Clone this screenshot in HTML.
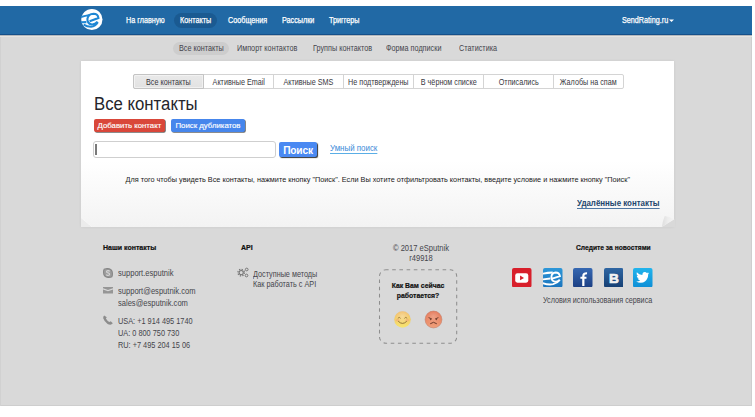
<!DOCTYPE html>
<html><head><meta charset="utf-8">
<style>
*{margin:0;padding:0;box-sizing:border-box}
html,body{width:755px;height:417px;overflow:hidden;background:#fff;font-family:"Liberation Sans",sans-serif}
.a{position:absolute;white-space:nowrap}
#page{position:absolute;left:0;top:6px;width:752px;height:400px;background:#d9d9d9;overflow:hidden;box-shadow:inset 1px 0 0 #d1d1d1,inset -1px -1px 0 #cecece}
#hdr{position:absolute;left:0;top:0;width:752px;height:29.4px;background:#2169a5;border-bottom:1px solid #15508a;box-shadow:0 1px 0 #b4b8bc,0 2px 0 #e6e4e2}
.hn{position:absolute;top:0;height:29px;line-height:28.4px;color:#fff;font-size:8.3px;-webkit-text-stroke:.25px #fff;transform:scaleX(.87);transform-origin:0 0}
.pill{position:absolute;left:174px;top:7px;width:43px;height:15px;border-radius:8px;background:#1a5a91}
.sn{position:absolute;top:36px;height:13px;line-height:13.6px;font-size:8.2px;color:#44444c;transform:scaleX(.885);transform-origin:0 0}
.snp{position:absolute;left:173px;top:35.6px;width:55.5px;height:13.6px;border-radius:7px;background:#cdcdcd}
#card{position:absolute;left:81px;top:55px;width:593px;height:166px;background:linear-gradient(#fff 0,#fff 60%,#f3f3f3 100%);box-shadow:0 0 3px rgba(0,0,0,.07)}
.tabs{position:absolute;left:52px;top:13px;width:491px;height:15px;border:1px solid #d4d4d4;border-radius:2px;background:#fff;display:flex}
.tab{flex:1;height:13px;line-height:15.2px;text-align:center;font-size:8.2px;color:#383840;border-left:1px solid #d4d4d4;white-space:nowrap}.tab span{display:inline-block;transform:scaleX(.88)}
.tab:first-child{border-left:0;background:linear-gradient(#e9e9e9,#e2e2e2);position:relative;box-shadow:inset 1px 1px 0 #f2f2f2,inset -1px -1px 0 #f0f0f0}.tab:first-child:before{content:'';position:absolute;left:-1px;top:-1px;right:-1px;bottom:-1px;border:1px solid #c4c4c4;border-radius:2px 0 0 2px}

.h1{position:absolute;left:12.8px;top:32.6px;font-size:17.6px;line-height:20px;color:#25252b;transform:scaleX(.952);transform-origin:0 0}
.btn{position:absolute;top:58px;height:13px;line-height:13px;font-size:7.8px;color:#fff;-webkit-text-stroke:.15px #fff;border-radius:2px;text-align:center;box-shadow:.8px .8px .6px rgba(0,0,0,.6)}
.inp{position:absolute;left:11.8px;top:80px;width:183.6px;height:16.5px;border:1px solid #cfcfcf;border-radius:3px;background:#fff}
.caret{position:absolute;left:1.6px;top:2.2px;width:1.2px;height:10.5px;background:#7a7a7a}
.bs{position:absolute;left:198px;top:80.7px;width:38px;height:15.2px;line-height:17.8px;background:#4a89f2;color:#fff;font-weight:bold;font-size:10.2px;text-align:center;border-radius:2px;box-shadow:1px 1px 1px #333;letter-spacing:-.2px}
.lnk{position:absolute;left:249px;top:81.6px;font-size:8.8px;line-height:11px;color:#3b8ad8;text-decoration:underline;text-decoration-color:#5aaee6;text-underline-offset:1.7px;transform:scaleX(.9);transform-origin:0 0}
.info{position:absolute;left:44.5px;top:113px;font-size:7.29px;line-height:11px;color:#222}
.del{position:absolute;left:495.8px;top:137px;font-size:9px;line-height:11px;color:#22456c;font-weight:bold;text-decoration:underline;text-decoration-color:#4f77a3;text-underline-offset:1.5px;transform:scaleX(.88);transform-origin:0 0}
.ft{position:absolute;font-size:8.6px;line-height:12px;color:#45454b;white-space:nowrap;transform:scaleX(.88);transform-origin:0 0}
.fb{position:absolute;font-size:7px;line-height:12px;color:#111;font-weight:bold;white-space:nowrap;-webkit-text-stroke:.2px #111}
.fbx{position:absolute;left:379px;top:263.5px;width:78.5px;height:74px;border-radius:6px}
.curl{position:absolute}
</style></head><body>
<div id="page">
  <div id="hdr">
    <svg class="a" style="left:80px;top:1px" width="25" height="25" viewBox="0 0 25 25">
      <circle cx="11.9" cy="12.5" r="10.6" fill="#fff"/>
      <g fill="none" stroke="#1f87d4" stroke-width="2.1" stroke-linecap="butt">
        <path d="M1 9.9 Q5 8.8 10 8"/>
        <path d="M9.6 14.3 L18.4 11 Q17.8 6.8 13.6 6.8 Q8.2 7 7.4 11.8 Q7.2 16.6 11.4 17.4 Q14.8 17.8 17.6 14.8"/>
        <path d="M1 15.3 L6.4 15.1"/>
        <path d="M3.6 17.6 Q7 19.8 11 19.8 Q15.4 19.2 17.8 15.2"/>
      </g>
    </svg>
    <div class="pill"></div>
    <div class="hn" style="left:126px">На главную</div>
    <div class="hn" style="left:180px">Контакты</div>
    <div class="hn" style="left:227.5px">Сообщения</div>
    <div class="hn" style="left:281.5px">Рассылки</div>
    <div class="hn" style="left:329px">Триггеры</div>
    <div class="hn" style="left:621.5px">SendRating.ru</div>
    <svg class="a" style="left:669px;top:13px" width="5" height="4" viewBox="0 0 5 4"><path d="M0 0.5 L5 0.5 L2.5 3 Z" fill="#fff"/></svg>
  </div>
  <div class="snp"></div>
  <div class="sn" style="left:178.5px">Все контакты</div>
  <div class="sn" style="left:237px">Импорт контактов</div>
  <div class="sn" style="left:313px">Группы контактов</div>
  <div class="sn" style="left:386px">Форма подписки</div>
  <div class="sn" style="left:459px">Статистика</div>

  <div id="card">
    <div class="tabs">
      <div class="tab"><span>Все контакты</span></div>
      <div class="tab"><span>Активные Email</span></div>
      <div class="tab"><span>Активные SMS</span></div>
      <div class="tab"><span>Не подтверждены</span></div>
      <div class="tab"><span>В чёрном списке</span></div>
      <div class="tab"><span>Отписались</span></div>
      <div class="tab"><span>Жалобы на спам</span></div>
    </div>

    <div class="h1">Все контакты</div>
    <div class="btn" style="left:12.6px;width:71.6px;background:#d9473a">Добавить контакт</div>
    <div class="btn" style="left:90px;width:74px;background:#4686ec">Поиск дубликатов</div>
    <div class="inp"><div class="caret"></div></div>
    <div class="bs">Поиск</div>
    <div class="lnk">Умный поиск</div>
    <div class="info">Для того чтобы увидеть Все контакты, нажмите кнопку "Поиск". Если Вы хотите отфильтровать контакты, введите условие и нажмите кнопку "Поиск"</div>
    
    <svg class="a" style="left:-2px;top:154px" width="16" height="12" viewBox="79 215 16 12">
      <path d="M81 217.6 L92.2 227 L81 227 Z" fill="#ececec"/>
      <path d="M81 217.6 L92.2 227" stroke="#f8f8f8" stroke-width=".8"/>
    </svg>
    <svg class="a" style="left:577px;top:152px" width="18" height="14" viewBox="658 213 18 14">
      <defs><linearGradient id="gc" x1="0" y1="0" x2="1" y2="0"><stop offset="0" stop-color="#dedede"/><stop offset=".5" stop-color="#ededed"/><stop offset="1" stop-color="#f4f4f4"/></linearGradient></defs>
      <path d="M674.2 219.2 L675 219.2 L675 227 L661.8 227 Z" fill="#d9d9d9"/>
      <path d="M664.8 216 Q669 216.6 674.2 219.3 L661.9 226.8 Q662.6 221 664.8 216 Z" fill="url(#gc)"/>
    </svg>
    <div class="del">Удалённые контакты</div>
  </div>

  <div class="fb" style="left:103px;top:236px">Наши контакты</div>
  <div class="ft" style="left:118px;top:261px">support.esputnik</div>
  <div class="ft" style="left:118px;top:279px">support@esputnik.com</div>
  <div class="ft" style="left:118px;top:291px">sales@esputnik.com</div>
  <div class="ft" style="left:118px;top:309px;transform:scaleX(.855)">USA: +1 914 495 1740</div>
  <div class="ft" style="left:118px;top:321px;transform:scaleX(.855)">UA: 0 800 750 730</div>
  <div class="ft" style="left:118px;top:333px;transform:scaleX(.855)">RU: +7 495 204 15 06</div>
  <div class="fb" style="left:241px;top:236px">API</div>
  <div class="ft" style="left:253px;top:261.5px;transform:scaleX(.845)">Доступные методы</div>
  <div class="ft" style="left:253px;top:271.5px;transform:scaleX(.845)">Как работать с API</div>
  <div class="ft" style="left:371px;width:100px;text-align:center;top:237px;line-height:10px;transform-origin:50% 0">© 2017 eSputnik<br>r49918</div>
  <div class="fb" style="left:576px;top:236px;font-size:7.3px;transform:scaleX(.915);transform-origin:0 0">Следите за новостями</div>
  <div class="ft" style="left:543px;top:288px;transform:scaleX(.84)">Условия использования сервиса</div>

  <svg class="a" style="left:102.5px;top:261.5px" width="10" height="10" viewBox="0 0 10 10">
    <path d="M2.6 0.7 Q3.4 0.6 4.8 0.6 Q9.2 0.8 9.4 5.2 Q9.4 6.6 9.3 7.4 Q9.3 9.3 7.4 9.3 Q6.6 9.4 5.2 9.4 Q0.8 9.2 0.6 4.8 Q0.6 3.4 0.7 2.6 Q0.7 0.7 2.6 0.7 Z" fill="#9d9d9d" stroke="#858585" stroke-width="1.1"/>
    <path d="M6.7 3.3 Q6.1 2.6 5 2.6 Q3.5 2.6 3.5 3.7 Q3.5 4.6 5 4.9 Q6.6 5.2 6.6 6.2 Q6.6 7.4 5 7.4 Q3.8 7.4 3.3 6.6" fill="none" stroke="#d6d6d6" stroke-width="1.1"/>
  </svg>
  <svg class="a" style="left:102px;top:279px" width="12" height="9" viewBox="0 0 12 9">
    <path d="M1 2 L11 2 L11 3.2 L6 5 L1 3.2 Z M1 4.4 L6 6.2 L11 4.4 L11 8.5 L1 8.5 Z" fill="#969696"/>
  </svg>
  <svg class="a" style="left:102.2px;top:308.2px" width="12" height="12" viewBox="0 0 12 12">
    <path d="M2.2 1.4 Q0.9 2.4 1.2 4.2 Q2.3 7.6 5.6 9.9 Q7.5 11 9.2 10.6 L10.9 9.3 L8.7 7.2 L7.4 8.1 Q5.1 6.9 3.9 4.6 L4.8 3.3 Z" fill="#8c8c8c"/>
  </svg>
  <svg class="a" style="left:236px;top:260.2px" width="14" height="12" viewBox="0 0 14 12">
    <g fill="none" stroke="#767676">
      <circle cx="5.2" cy="6.6" r="3.3" stroke-dasharray="1.3 1.29" stroke-width="1.2"/>
      <circle cx="5.2" cy="6.6" r="2.1" stroke-width="1.1"/>
      <circle cx="10.7" cy="3.5" r="1.35" stroke-width="1"/>
      <circle cx="10.5" cy="9.5" r="1.35" stroke-width="1"/>
    </g>
  </svg>
  <svg class="a" style="left:376px;top:261px" width="86" height="82" viewBox="376 267 86 82">
    <rect x="379.5" y="269.7" width="77.2" height="73.6" rx="6.5" fill="none" stroke="#8e8e8e" stroke-width="1.05" stroke-dasharray="3.6 3.6" stroke-dashoffset="1"/>
  </svg>
  <div class="fb" style="left:367.5px;width:100px;text-align:center;top:275px;line-height:10px;font-size:7.4px;transform:scaleX(.93)">Как Вам сейчас<br>работается?</div>
  <svg class="a" style="left:393px;top:304px" width="19" height="19" viewBox="0 0 19 19">
    <defs><linearGradient id="gs" x1="0" y1="0" x2="0" y2="1"><stop offset="0" stop-color="#f0b75c"/><stop offset=".55" stop-color="#f4d168"/><stop offset="1" stop-color="#f7e671"/></linearGradient>
    <radialGradient id="hs" cx=".5" cy=".3" r=".5"><stop offset="0" stop-color="#fff" stop-opacity=".35"/><stop offset="1" stop-color="#fff" stop-opacity="0"/></radialGradient></defs>
    <circle cx="9.5" cy="9.5" r="8.9" fill="#d3d7e0"/>
    <circle cx="9.5" cy="9.5" r="8.3" fill="url(#gs)"/>
    <circle cx="9.5" cy="9.5" r="8.3" fill="url(#hs)"/>
    <ellipse cx="4.6" cy="10.3" rx="1.8" ry="1.2" fill="#f09a78" opacity=".45"/>
    <ellipse cx="14.4" cy="10.3" rx="1.8" ry="1.2" fill="#f09a78" opacity=".45"/>
    <path d="M4.8 8.4 Q6.2 6.2 7.6 8.4 M11.4 8.4 Q12.8 6.2 14.2 8.4" fill="none" stroke="#8a6a30" stroke-width=".8"/>
    <path d="M5.2 11.2 Q9.5 15.6 13.8 11.2" fill="none" stroke="#8a6a30" stroke-width=".9"/>
  </svg>
  <svg class="a" style="left:424px;top:304px" width="19" height="19" viewBox="0 0 19 19">
    <defs><linearGradient id="ga" x1="0" y1="0" x2="0" y2="1"><stop offset="0" stop-color="#e36f4f"/><stop offset="1" stop-color="#f0a27d"/></linearGradient>
    <radialGradient id="ha" cx=".5" cy=".3" r=".5"><stop offset="0" stop-color="#fff" stop-opacity=".25"/><stop offset="1" stop-color="#fff" stop-opacity="0"/></radialGradient></defs>
    <circle cx="9.5" cy="9.5" r="8.9" fill="#d2cfd2"/>
    <circle cx="9.5" cy="9.5" r="8.4" fill="url(#ga)" stroke="#c57a63" stroke-width=".5"/>
    <circle cx="9.5" cy="9.5" r="8.3" fill="url(#ha)"/>
    <path d="M4.6 7.6 L7.9 9 M14.4 7.6 L11.1 9" stroke="#6e3b2c" stroke-width="1"/>
    <circle cx="6.6" cy="9.6" r=".7" fill="#6e3b2c"/><circle cx="12.4" cy="9.6" r=".7" fill="#6e3b2c"/>
    <path d="M6.2 13.8 Q9.5 10.8 12.8 13.8" fill="none" stroke="#6e3b2c" stroke-width="1"/>
  </svg>
  <svg class="a" style="left:512.3px;top:261.5px" width="19.5" height="19.5" viewBox="0 0 20 20">
    <rect width="20" height="20" rx="2" fill="#d81f2b"/>
    <rect x="3.3" y="5.5" width="13.4" height="9.5" rx="2.2" fill="#fff"/>
    <path d="M8.3 7.8 L12.3 10.2 L8.3 12.6 Z" fill="#d81f2b"/>
  </svg>
  <svg class="a" style="left:543px;top:261.7px" width="19.5" height="19.5" viewBox="0 0 20 20">
    <defs><linearGradient id="ge" x1="0" y1="0" x2="0" y2="1"><stop offset="0" stop-color="#2d97d8"/><stop offset="1" stop-color="#1b74bd"/></linearGradient></defs>
    <rect width="20" height="20" rx="2" fill="url(#ge)"/>
    <g fill="none" stroke="#fff" stroke-width="1.9"><path d="M-1 6 Q4 4.8 10 4.6"/>
    <path d="M9.4 11 L17.4 8.4 Q16.6 4.6 13 4.6 Q9 4.8 8.6 9.2 Q8.6 13.6 12.6 14 Q15.2 14 17.2 12.2"/>
    <path d="M-1 11.8 L7.6 10.8"/>
    <path d="M-1 15.2 Q5 17.6 10.4 16.6 Q14.6 15.6 17.2 12.2"/></g>
    </svg>
  <svg class="a" style="left:573px;top:261.7px" width="19.5" height="19.5" viewBox="0 0 20 20">
    <defs><linearGradient id="gf" x1="0" y1="0" x2="0" y2="1"><stop offset="0" stop-color="#3668b2"/><stop offset="1" stop-color="#1c3f83"/></linearGradient></defs>
    <rect width="20" height="20" rx="2" fill="url(#gf)"/>
    <path d="M10.6 18.4 L10.6 8.4 Q10.6 5.2 14.4 5.4 M7.6 10 L13.8 10" fill="none" stroke="#fff" stroke-width="2.3"/>
  </svg>
  <svg class="a" style="left:603.5px;top:261.7px" width="19.5" height="19.5" viewBox="0 0 20 20">
    <defs><linearGradient id="gv" x1="0" y1="0" x2="0" y2="1"><stop offset="0" stop-color="#2f66a3"/><stop offset="1" stop-color="#153f73"/></linearGradient></defs>
    <rect width="20" height="20" rx="2" fill="url(#gv)"/>
    <text x="10.2" y="15.6" text-anchor="middle" font-family="Liberation Sans" font-weight="bold" font-size="14" fill="#f2f2f2" stroke="#f2f2f2" stroke-width=".7">B</text>
  </svg>
  <svg class="a" style="left:633.2px;top:261.7px" width="19.5" height="19.5" viewBox="0 0 20 20">
    <defs><linearGradient id="gt" x1="0" y1="0" x2="0" y2="1"><stop offset="0" stop-color="#22b4ec"/><stop offset="1" stop-color="#0d8ed6"/></linearGradient></defs>
    <rect width="20" height="20" rx="2" fill="url(#gt)"/>
    <path d="M16.5 5.2 Q15.6 5.6 14.8 5.7 Q15.6 5.1 15.9 4.3 Q15 4.8 14.2 5 Q13.3 4.1 12.1 4.1 Q9.6 4.3 9.6 7.2 Q6.2 7 3.9 4.4 Q3 6.5 5 8.2 Q4.3 8.2 3.8 7.9 Q3.9 10 6 10.6 Q5.4 10.8 4.7 10.7 Q5.4 12.4 7.4 12.6 Q5.5 14 3.2 13.8 Q5.4 15.2 8 15.2 Q13 15.2 15 10 Q15.6 8.5 15.5 6.6 Q16.1 6 16.5 5.2 Z" fill="#fff"/>
  </svg>
</div>
</body></html>
